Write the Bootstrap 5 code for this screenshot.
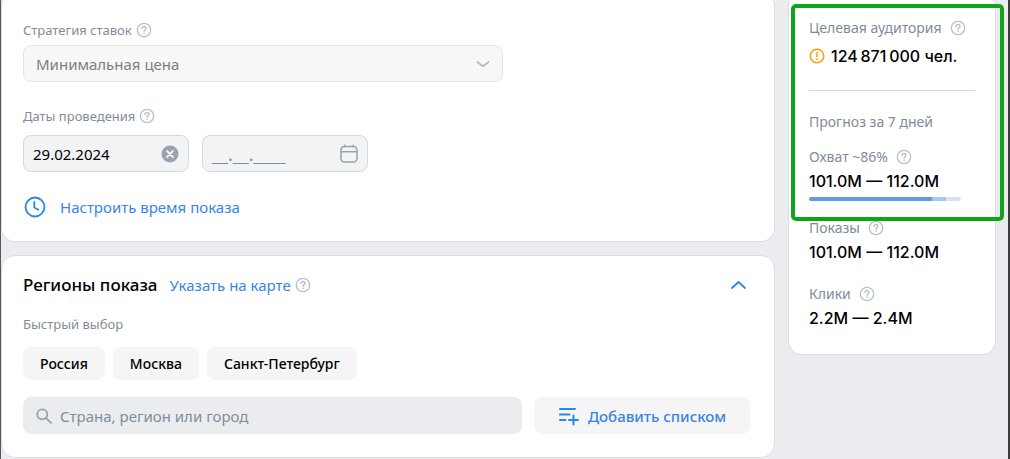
<!DOCTYPE html>
<html lang="ru">
<head>
<meta charset="utf-8">
<meta name="viewport" content="width=device-width, initial-scale=1">
<title>Настройки группы объявлений</title>
<link href="https://cdn.jsdelivr.net/npm/bootstrap@5.3.0/dist/css/bootstrap.min.css" rel="stylesheet">
<style>
  :root { --muted: #818c99; --accent: #3a84e8; --line: #dcdee1; --icon: #b8c1cc; }
  body { background: #ebecf0; color: #000; font: 400 15px/20px "Noto Sans", "Open Sans", sans-serif; }
  .page-frame { border-left: 1px solid #55575a; border-right: 2px solid #3a3b3d; padding-right: 12px; min-height: 100vh; gap: 13px; }
  .main-col { min-width: 0; gap: 13px; }
  .panel { background: #fff; border: 1px solid var(--line); border-radius: 14px; padding: 18px 24px 23px 21px; }
  .panel-first { border-top: 0; border-top-left-radius: 4px; border-top-right-radius: 4px; }
  .settings-panel { padding-top: 20px; padding-bottom: 22px; }
  .caption { font-size: 13px; line-height: 20px; color: var(--muted); }
  .caption-row { margin-bottom: 5px; }
  .side-caption { font-size: 14px; line-height: 20px; color: var(--muted); }
  .help { border: 0; padding: 0; background: none; color: var(--icon); line-height: 0; display: inline-flex; }
  .field { height: 37px; border: 1px solid #d7d8da; border-radius: 8px; background: #f2f3f5; display: flex; align-items: center; }
  .field input, .field select { border: 0; background: none; outline: 0; padding: 0; min-width: 0; flex: 1; color: #000; font-size: 15px; line-height: 20px; appearance: none; }
  .field input::placeholder { color: var(--muted); opacity: 1; }
  .field .date-empty { font-size: 18px; }
  .field-strategy { width: 66%; background: #f7f7f8; border-color: #e4e5e7; padding: 0 9px 0 12px; }
  .field-strategy select:disabled { color: #7d7f82; opacity: 1; }
  .date-row { gap: 13px; }
  .field-date { width: 166px; padding: 0 9px; }
  .field-search { flex: 1; background: #ebecf0; border-color: #ebecf0; padding: 0 12px; gap: 8px; }
  .link-main { color: var(--accent); text-decoration: none; }
  .time-link { margin-top: 23px; gap: 13px; }
  .panel-title { font-size: 17px; line-height: 22px; font-weight: 500; }
  .quick-caption { margin: 18px 0 13px; }
  .chips { gap: 8px; margin-bottom: 17px; }
  .chip { height: 33px; border: 0; border-radius: 8px; background: #f5f5f5; padding: 0 17px; font-size: 14px; line-height: 20px; font-weight: 500; color: #000; }
  .search-row { gap: 12px; }
  .btn-add { height: 37px; width: 216px; border: 0; border-radius: 8px; background: #f5f5f5; color: var(--accent); font-weight: 500; font-size: 15px; line-height: 20px; padding: 0; }
  .side-col { width: 208px; flex: none; }
  .side-panel { padding: 18px 20px 25px; }
  .metric { font: 500 16px/22px Inter, "Noto Sans", sans-serif; }
  .audience { margin-top: 7px; gap: 6px; }
  .side-rule { border-top: 1px solid #d3d6db; opacity: 1; margin: 23px 0 21px; }
  .forecast { margin-bottom: 15px; }
  .reach-value { margin: 3px 0 5px; }
  .reach-bar { width: 152px; height: 4px; border-radius: 2px; --bs-progress-bg: #dce1e6; }
  .reach-low { background: #5f9ae6; }
  .reach-high { background: #a3c8f5; }
  .shows { margin: 17px 0 3px; }
  .clicks { margin: 21px 0 3px; }
  .highlight { position: absolute; top: 4px; left: 3px; right: -8px; height: 217px; border: 4px solid #0fa516; border-radius: 5px; pointer-events: none; }
</style>
</head>
<body>
<svg class="d-none" aria-hidden="true">
  <symbol id="i-help" viewBox="0 0 16 16">
    <circle cx="8" cy="8" r="6.7" fill="none" stroke="currentColor" stroke-width="1.3"/>
    <path d="M6 6.5C6 5.2 6.9 4.5 8 4.5s2 .7 2 1.8C10 7.6 8.1 7.7 8.1 9.3" fill="none" stroke="currentColor" stroke-width="1.4" stroke-linecap="round"/>
    <circle cx="8.1" cy="11.3" r=".85" fill="currentColor"/>
  </symbol>
</svg>
<div class="page-frame d-flex align-items-start">
  <main class="main-col flex-grow-1 d-flex flex-column">
    <section class="panel panel-first settings-panel">
      <div class="d-flex align-items-center gap-1 caption-row">
        <label class="caption" for="strategy">Стратегия ставок</label>
        <button class="help" type="button" aria-label="Справка"><svg width="16" height="16"><use href="#i-help"/></svg></button>
      </div>
      <div class="field field-strategy">
        <select id="strategy" disabled><option>Минимальная цена</option></select>
        <svg width="20" height="20" viewBox="0 0 20 20" fill="none" stroke="#b4bac2" stroke-width="1.7" stroke-linecap="round" stroke-linejoin="round"><path d="M4.5 8l5.5 4.3L15.500 8"/></svg>
      </div>
      <div class="d-flex align-items-center gap-1 caption-row pt-4">
        <label class="caption" for="date-from">Даты проведения</label>
        <button class="help" type="button" aria-label="Справка"><svg width="16" height="16"><use href="#i-help"/></svg></button>
      </div>
      <div class="d-flex date-row pt-1">
        <div class="field field-date">
          <input id="date-from" type="text" value="29.02.2024">
          <button class="help" type="button" aria-label="Очистить"><svg width="18" height="18" viewBox="0 0 18 18"><circle cx="9" cy="9" r="8.500" fill="#99a2ad"/><path d="M6 6l6 6M12 6l-6 6" stroke="#f2f3f5" stroke-width="1.800" stroke-linecap="round"/></svg></button>
        </div>
        <div class="field field-date">
          <input class="date-empty" type="text" placeholder="__.__.____" aria-label="Дата окончания">
          <svg width="18" height="20" viewBox="0 0 18 20" fill="none" stroke="#99a2ad" stroke-width="1.500" stroke-linecap="round"><rect x="1" y="2.500" width="16" height="15.500" rx="3.500"/><path d="M1 7.800h16M4.800 1.200v1.600M13.200 1.200v1.600"/></svg>
        </div>
      </div>
      <a class="link-main d-flex align-items-center time-link" href="#time">
        <svg width="24" height="24" viewBox="0 0 24 24" fill="none" stroke="#2688eb" stroke-width="1.800" stroke-linecap="round" stroke-linejoin="round"><circle cx="12" cy="12" r="9.500"/><path d="M11.300 7v5.500l4 2.200"/></svg>Настроить время показа
      </a>
    </section>

    <section class="panel">
      <div class="d-flex align-items-center">
        <h2 class="panel-title mb-0 me-2">Регионы показа</h2>
        <a class="link-main ms-1 me-1" href="#map">Указать на карте</a>
        <button class="help" type="button" aria-label="Справка"><svg width="16" height="16"><use href="#i-help"/></svg></button>
        <button class="help ms-auto link-main" type="button" aria-label="Свернуть"><svg width="20" height="20" viewBox="0 0 20 20" fill="none" stroke="#2688eb" stroke-width="1.800" stroke-linecap="round" stroke-linejoin="round"><path d="M2 13l6.500-6L15 13"/></svg></button>
      </div>
      <div class="caption quick-caption">Быстрый выбор</div>
      <div class="d-flex flex-wrap chips">
        <button class="chip" type="button">Россия</button>
        <button class="chip" type="button">Москва</button>
        <button class="chip" type="button">Санкт-Петербург</button>
      </div>
      <div class="d-flex search-row">
        <div class="field field-search">
          <svg width="16" height="16" viewBox="0 0 16 16" fill="none" stroke="#99a2ad" stroke-width="1.800" stroke-linecap="round"><circle cx="6.300" cy="6.300" r="5"/><path d="M10 10l5 4.800"/></svg>
          <input type="search" placeholder="Страна, регион или город" aria-label="Страна, регион или город">
        </div>
        <button class="btn-add d-flex align-items-center justify-content-center gap-2" type="button">
          <svg width="22" height="20" viewBox="0 0 22 20" fill="none" stroke="#2688eb" stroke-width="2" stroke-linecap="round"><path d="M2 3h15M2 8.500h9.500M2 14h5.500M15.500 9.500v9M11 14h9"/></svg>Добавить списком
        </button>
      </div>
    </section>
  </main>

  <aside class="side-col position-relative">
    <div class="panel panel-first side-panel">
      <div class="d-flex align-items-center gap-2 side-caption">Целевая аудитория
        <button class="help" type="button" aria-label="Справка"><svg width="16" height="16"><use href="#i-help"/></svg></button></div>
      <div class="d-flex align-items-center metric audience">
        <svg width="16" height="16" viewBox="0 0 16 16" fill="none" stroke="#ffa000" stroke-width="1.500" stroke-linecap="round"><circle cx="8" cy="8" r="6.800"/><path d="M8 4.500v4"/><circle cx="8" cy="11.200" r=".5" fill="#ffa000" stroke-width=".8"/></svg>124&#8201;871&#8201;000 чел.
      </div>
      <hr class="side-rule">
      <div class="side-caption forecast">Прогноз за 7 дней</div>
      <div class="d-flex align-items-center gap-2 side-caption">Охват ~86%
        <button class="help" type="button" aria-label="Справка"><svg width="16" height="16"><use href="#i-help"/></svg></button></div>
      <div class="metric reach-value">101.0M — 112.0M</div>
      <div class="progress reach-bar" role="progressbar" aria-label="Охват" aria-valuenow="86" aria-valuemin="0" aria-valuemax="100">
        <div class="reach-low" style="width:81%"></div><div class="reach-high" style="width:9%"></div>
      </div>
      <div class="d-flex align-items-center gap-2 side-caption shows">Показы
        <button class="help" type="button" aria-label="Справка"><svg width="16" height="16"><use href="#i-help"/></svg></button></div>
      <div class="metric">101.0M — 112.0M</div>
      <div class="d-flex align-items-center gap-2 side-caption clicks">Клики
        <button class="help" type="button" aria-label="Справка"><svg width="16" height="16"><use href="#i-help"/></svg></button></div>
      <div class="metric">2.2M — 2.4M</div>
    </div>
    <div class="highlight"></div>
  </aside>
</div>
<script src="https://cdn.jsdelivr.net/npm/bootstrap@5.3.0/dist/js/bootstrap.bundle.min.js"></script>
</body>
</html>
